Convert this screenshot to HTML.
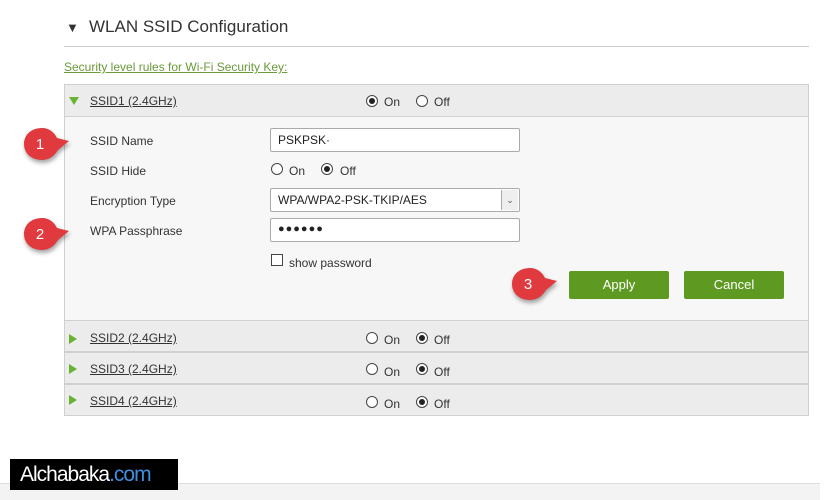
<!DOCTYPE html>
<html><head><meta charset="utf-8"><style>
*{margin:0;padding:0;box-sizing:border-box}
body{width:825px;height:500px;background:#fff;position:relative;overflow:hidden;font-family:"Liberation Sans",sans-serif;color:#333}
.a{position:absolute}
.t{font-size:12px;color:#333}
.rad{position:absolute;width:12px;height:12px;border:1px solid #444;border-radius:50%;background:#fff}
.rad.on::after{content:"";position:absolute;left:2px;top:2px;width:6px;height:6px;border-radius:50%;background:#222}
.inp{position:absolute;height:24px;border:1px solid #aaa;border-radius:2px;background:#fff;font-size:12px;padding:4px 7px;color:#222}
.btn{position:absolute;width:100px;height:28px;background:#5e9a22;color:#fff;font-size:13px;text-align:center;line-height:28px;border-radius:2px}
.row{position:absolute;left:64px;width:745px;height:32px;background:#ececec;border:1px solid #d0d0d0}
.tri{position:absolute;width:0;height:0;border-top:5px solid transparent;border-bottom:5px solid transparent;border-left:8px solid #6ab232}
.lnk{position:absolute;font-size:12px;color:#333;text-decoration:underline}
.badge{position:absolute;width:48px;height:36px;filter:drop-shadow(1px 3px 2px rgba(0,0,0,.35))}
</style></head><body>
<div class="a" style="left:66px;top:20px;font-size:13px;color:#333">▼</div>
<div class="a" style="left:89px;top:17px;font-size:17px;color:#333">WLAN SSID Configuration</div>
<div class="a" style="left:64px;top:46px;width:745px;height:1px;background:#ccc"></div>
<div class="lnk" style="left:64px;top:60px;color:#6a9a3a;font-size:12px">Security level rules for Wi-Fi Security Key:</div>

<div class="a" style="left:64px;top:84px;width:745px;height:237px;background:#f7f7f7;border:1px solid #d0d0d0"></div>
<div class="a" style="left:64px;top:84px;width:745px;height:33px;background:#ececec;border:1px solid #d0d0d0"></div>
<div class="a" style="left:69px;top:97px;width:0;height:0;border-left:5px solid transparent;border-right:5px solid transparent;border-top:8px solid #6ab232"></div>
<div class="lnk" style="left:90px;top:94px">SSID1 (2.4GHz)</div>
<div class="rad on" style="left:366px;top:95px"></div><div class="a t" style="left:384px;top:95px">On</div>
<div class="rad" style="left:416px;top:95px"></div><div class="a t" style="left:434px;top:95px">Off</div>

<div class="a t" style="left:90px;top:134px">SSID Name</div>
<div class="inp" style="left:270px;top:128px;width:250px">PSKPSK·</div>
<div class="a t" style="left:90px;top:164px">SSID Hide</div>
<div class="rad" style="left:271px;top:163px"></div><div class="a t" style="left:289px;top:164px">On</div>
<div class="rad on" style="left:321px;top:163px"></div><div class="a t" style="left:340px;top:164px">Off</div>
<div class="a t" style="left:90px;top:194px">Encryption Type</div>
<div class="inp" style="left:270px;top:188px;width:250px">WPA/WPA2-PSK-TKIP/AES</div>
<div class="a" style="left:501px;top:190px;width:17px;height:20px;border-left:1px solid #aaa;background:#eee;font-size:9px;text-align:center;line-height:20px;color:#555">⌄</div>
<div class="a t" style="left:90px;top:224px">WPA Passphrase</div>
<div class="inp" style="left:270px;top:218px;width:250px;font-size:11px;letter-spacing:1px">●●●●●●</div>
<div class="a" style="left:271px;top:254px;width:12px;height:12px;border:1px solid #444;background:#fff"></div>
<div class="a t" style="left:289px;top:256px">show password</div>
<div class="btn" style="left:569px;top:271px">Apply</div>
<div class="btn" style="left:684px;top:271px">Cancel</div>

<div class="row" style="top:320px"></div>
<div class="tri" style="left:69px;top:334px"></div>
<div class="lnk" style="left:90px;top:331px">SSID2 (2.4GHz)</div>
<div class="rad" style="left:366px;top:332px"></div><div class="a t" style="left:384px;top:333px">On</div>
<div class="rad on" style="left:416px;top:332px"></div><div class="a t" style="left:434px;top:333px">Off</div>

<div class="row" style="top:352px"></div>
<div class="tri" style="left:69px;top:364px"></div>
<div class="lnk" style="left:90px;top:362px">SSID3 (2.4GHz)</div>
<div class="rad" style="left:366px;top:363px"></div><div class="a t" style="left:384px;top:365px">On</div>
<div class="rad on" style="left:416px;top:363px"></div><div class="a t" style="left:434px;top:365px">Off</div>

<div class="row" style="top:384px"></div>
<div class="tri" style="left:69px;top:395px"></div>
<div class="lnk" style="left:90px;top:394px">SSID4 (2.4GHz)</div>
<div class="rad" style="left:366px;top:396px"></div><div class="a t" style="left:384px;top:397px">On</div>
<div class="rad on" style="left:416px;top:396px"></div><div class="a t" style="left:434px;top:397px">Off</div>

<svg class="badge" style="left:22px;top:126px" viewBox="0 0 48 36"><path d="M20 2 C9 2 2 9 2 18 C2 27 9 34 20 34 C28 34 33 29 36 24 L47 15 L35 12 C32 6 27 2 20 2Z" fill="#e0393e"/><text x="18" y="23" font-size="15" fill="#fff" text-anchor="middle" font-family="Liberation Sans">1</text></svg>
<svg class="badge" style="left:22px;top:216px" viewBox="0 0 48 36"><path d="M20 2 C9 2 2 9 2 18 C2 27 9 34 20 34 C28 34 33 29 36 24 L47 15 L35 12 C32 6 27 2 20 2Z" fill="#e0393e"/><text x="18" y="23" font-size="15" fill="#fff" text-anchor="middle" font-family="Liberation Sans">2</text></svg>
<svg class="badge" style="left:510px;top:266px" viewBox="0 0 48 36"><path d="M20 2 C9 2 2 9 2 18 C2 27 9 34 20 34 C28 34 33 29 36 24 L47 15 L35 12 C32 6 27 2 20 2Z" fill="#e0393e"/><text x="18" y="23" font-size="15" fill="#fff" text-anchor="middle" font-family="Liberation Sans">3</text></svg>

<div class="a" style="left:0;top:483px;width:820px;height:17px;background:#f3f3f3;border-top:1px solid #ddd"></div>
<div class="a" style="left:10px;top:459px;width:168px;height:31px;background:#000;color:#fff;font-size:21px;line-height:31px;padding-left:10px;letter-spacing:-1px">Alchabaka<span style="color:#3d8fe0">.com</span></div>
</body></html>
